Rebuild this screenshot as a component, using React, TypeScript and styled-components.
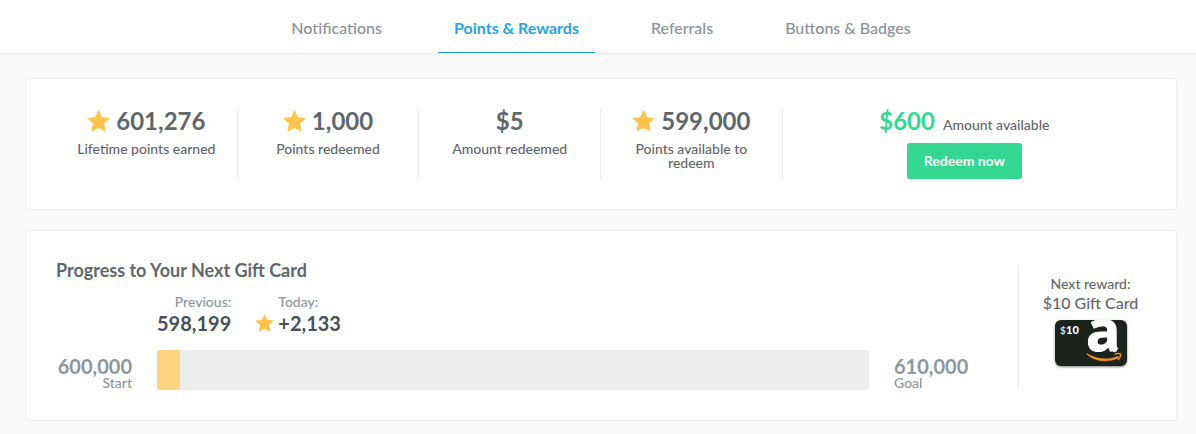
import React from 'react';
import styled, { createGlobalStyle } from 'styled-components';

const GlobalStyle = createGlobalStyle`
  * { box-sizing: border-box; }
  body {
    margin: 0;
    background: #fafafa;
    color: #5f676d;
    font-family: Lato, "Liberation Sans", sans-serif;
    font-size: 14px;
    line-height: 14px;
  }
`;

const TabBar = styled.nav`
  display: flex;
  justify-content: center;
  gap: 40px;
  height: 54px;
  padding: 0 19px 0 25px;
  background: #fff;
  border-bottom: 1px solid #ececec;
`;

const Tab = styled.a<{ $active?: boolean }>`
  padding: 0 16px;
  line-height: 56px;
  height: 53px;
  font-size: 16px;
  font-weight: ${p => (p.$active ? 700 : 500)};
  color: ${p => (p.$active ? '#2aa3e0' : '#899297')};
  border-bottom: 1px solid ${p => (p.$active ? '#1ba1e2' : 'transparent')};
  text-decoration: none;
  white-space: nowrap;
`;

const Page = styled.main`
  display: flex;
  flex-direction: column;
  gap: 20px;
  padding: 24px 19px 13px 25px;
`;

const Card = styled.section`
  background: #fff;
  border: 1px solid #ececec;
  border-radius: 3px;
`;

const StatsCard = styled(Card)`
  display: grid;
  grid-template-columns: repeat(4, minmax(0, 1fr)) minmax(0, 2fr);
  padding: 30px;
`;

const Stat = styled.div`
  display: flex;
  flex-direction: column;
  align-items: center;
  gap: 9px;
  padding: 0 20px;
  border-right: 1px solid #ececec;
  text-align: center;
`;

const StatValue = styled.div<{ $accent?: boolean }>`
  display: flex;
  align-items: center;
  gap: 6px;
  font-size: 24px;
  line-height: 24px;
  font-weight: 700;
  color: ${p => (p.$accent ? '#33d790' : '#5f676d')};
`;

const StatLabel = styled.div`
  font-weight: 500;
`;

const Redeem = styled.div`
  display: flex;
  flex-direction: column;
  align-items: center;
  gap: 10px;
`;

const Available = styled.div`
  display: flex;
  align-items: baseline;
  gap: 8px;
`;

const RedeemButton = styled.button`
  height: 36px;
  padding: 0 17px 2px;
  border: 0;
  border-radius: 3px;
  background: #33d790;
  color: #fff;
  font: 700 14px Lato, "Liberation Sans", sans-serif;
`;

const ProgressCard = styled(Card)`
  display: flex;
  padding: 30px 14px 30px 30px;
`;

const ProgressMain = styled.div`
  flex: 1;
`;

const Title = styled.h2`
  margin: 0 0 15px;
  font-size: 18px;
  line-height: 18px;
  font-weight: 700;
`;

const ProgressGrid = styled.div`
  display: grid;
  grid-template-columns: 76px minmax(0, 1fr) 76px;
  column-gap: 25px;
  row-gap: 14px;
  margin-right: 48px;
`;

const Figures = styled.div`
  grid-column: 2 / 4;
  display: flex;
  gap: 24px;
`;

const Figure = styled.div<{ $align?: string }>`
  display: grid;
  grid-template-columns: auto auto;
  align-items: center;
  text-align: ${p => p.$align || 'left'};

  svg {
    margin-right: 4px;
  }
`;

const FigureLabel = styled.span`
  grid-column: 2;
  line-height: 16px;
  font-weight: 500;
  color: #8d969b;
`;

const FigureValue = styled.strong`
  grid-column: 2;
  font-size: 20px;
  line-height: 26px;
  color: #4a5055;
`;

const Bound = styled.div<{ $align: string }>`
  padding-top: 6px;
  font-weight: 500;
  text-align: ${p => p.$align};
  color: #8d969b;
`;

const BoundValue = styled.div`
  font-size: 20px;
  line-height: 20px;
  font-weight: 700;
`;

const Track = styled.div`
  height: 40px;
  border-radius: 3px;
  overflow: hidden;
  background: #ecedee;
`;

const Fill = styled.div`
  height: 100%;
  background: #ffd483;
`;

const Reward = styled.aside`
  display: flex;
  flex-direction: column;
  align-items: center;
  width: 144px;
  margin: 4px 0 2px;
  padding-top: 11px;
  border-left: 1px solid #ececec;
  font-weight: 500;
  line-height: 16px;
`;

const RewardName = styled.div`
  margin: 1px 0 6px;
  font-size: 16px;
  line-height: 20px;
`;

const Star = ({ size }: { size: number }) => (
  <svg width={size} height={size} viewBox="0 0 22 22" aria-hidden="true">
    <path
      d="M11 1l2.900 6.300 7.100.8-5.200 4.800 1.400 7.100L11 16.700 4.800 20l1.400-7.100L1 8.100l7.100-.8z"
      fill="#ffc34e"
      stroke="#ffc34e"
      strokeWidth="1"
      strokeLinejoin="round"
    />
  </svg>
);

const GiftCard = () => (
  <svg width="78" height="52" viewBox="0 0 78 52" role="img" aria-label="$10 Amazon gift card">
    <defs>
      <clipPath id="card">
        <rect x="3" y="1" width="72" height="46" rx="6" />
      </clipPath>
      <filter id="shadow" x="-10%" y="-10%" width="120%" height="125%">
        <feDropShadow dx="0" dy="1" stdDeviation="1" floodColor="#000" floodOpacity="0.5" />
      </filter>
    </defs>
    <rect x="3" y="1" width="72" height="46" rx="6" fill="#1e231f" filter="url(#shadow)" />
    <g clipPath="url(#card)">
      <text x="34" y="32" fontFamily="Open Sans, sans-serif" fontWeight="700" fontSize="57" fill="#fff" stroke="#fff" strokeWidth="1">a</text>
      <path d="M58 29l4-4 4.500 4.500-4 4z" fill="#fff" />
    </g>
    <text x="8" y="15" fontFamily="Lato, sans-serif" fontWeight="700" fontSize="10" fill="#ddd">$</text>
    <text x="14" y="15" fontFamily="Lato, sans-serif" fontWeight="900" fontSize="11" fill="#fff">10</text>
    <path d="M34.500 35c8 7.500 22 9.200 32.500 3.600l-.8-1.300c-10 4.200-22 3.200-31.200-2.800z" fill="#f7941e" stroke="#f7941e" strokeWidth="0.500" />
    <path d="M62.500 35.500c2.500-1.200 5-1.200 6-.5.400 1.800-.6 4.300-2.500 6" fill="none" stroke="#f7941e" strokeWidth="1.300" />
  </svg>
);

const tabs = ['Notifications', 'Points & Rewards', 'Referrals', 'Buttons & Badges'];

const stats = [
  { value: '601,276', label: 'Lifetime points earned', star: true },
  { value: '1,000', label: 'Points redeemed', star: true },
  { value: '$5', label: 'Amount redeemed', star: false },
  { value: '599,000', label: 'Points available to redeem', star: true },
];

const progress = 3.3;

export default function App() {
  return (
    <>
      <GlobalStyle />
      <TabBar>
        {tabs.map(t => (
          <Tab key={t} href="#" $active={t === 'Points & Rewards'}>{t}</Tab>
        ))}
      </TabBar>
      <Page>
        <StatsCard>
          {stats.map(s => (
            <Stat key={s.label}>
              <StatValue>{s.star && <Star size={23} />}{s.value}</StatValue>
              <StatLabel>{s.label}</StatLabel>
            </Stat>
          ))}
          <Redeem>
            <Available>
              <StatValue $accent>$600</StatValue>
              <StatLabel>Amount available</StatLabel>
            </Available>
            <RedeemButton type="button">Redeem now</RedeemButton>
          </Redeem>
        </StatsCard>
        <ProgressCard>
          <ProgressMain>
            <Title>Progress to Your Next Gift Card</Title>
            <ProgressGrid>
              <Figures>
                <Figure $align="right">
                  <FigureLabel>Previous:</FigureLabel>
                  <FigureValue>598,199</FigureValue>
                </Figure>
                <Figure>
                  <FigureLabel>Today:</FigureLabel>
                  <Star size={19} />
                  <FigureValue>+2,133</FigureValue>
                </Figure>
              </Figures>
              <Bound $align="right"><BoundValue>600,000</BoundValue>Start</Bound>
              <Track role="progressbar" aria-label="Progress to next gift card" aria-valuenow={progress}>
                <Fill style={{ width: `${progress}%` }} />
              </Track>
              <Bound $align="left"><BoundValue>610,000</BoundValue>Goal</Bound>
            </ProgressGrid>
          </ProgressMain>
          <Reward>
            Next reward:
            <RewardName>$10 Gift Card</RewardName>
            <GiftCard />
          </Reward>
        </ProgressCard>
      </Page>
    </>
  );
}
